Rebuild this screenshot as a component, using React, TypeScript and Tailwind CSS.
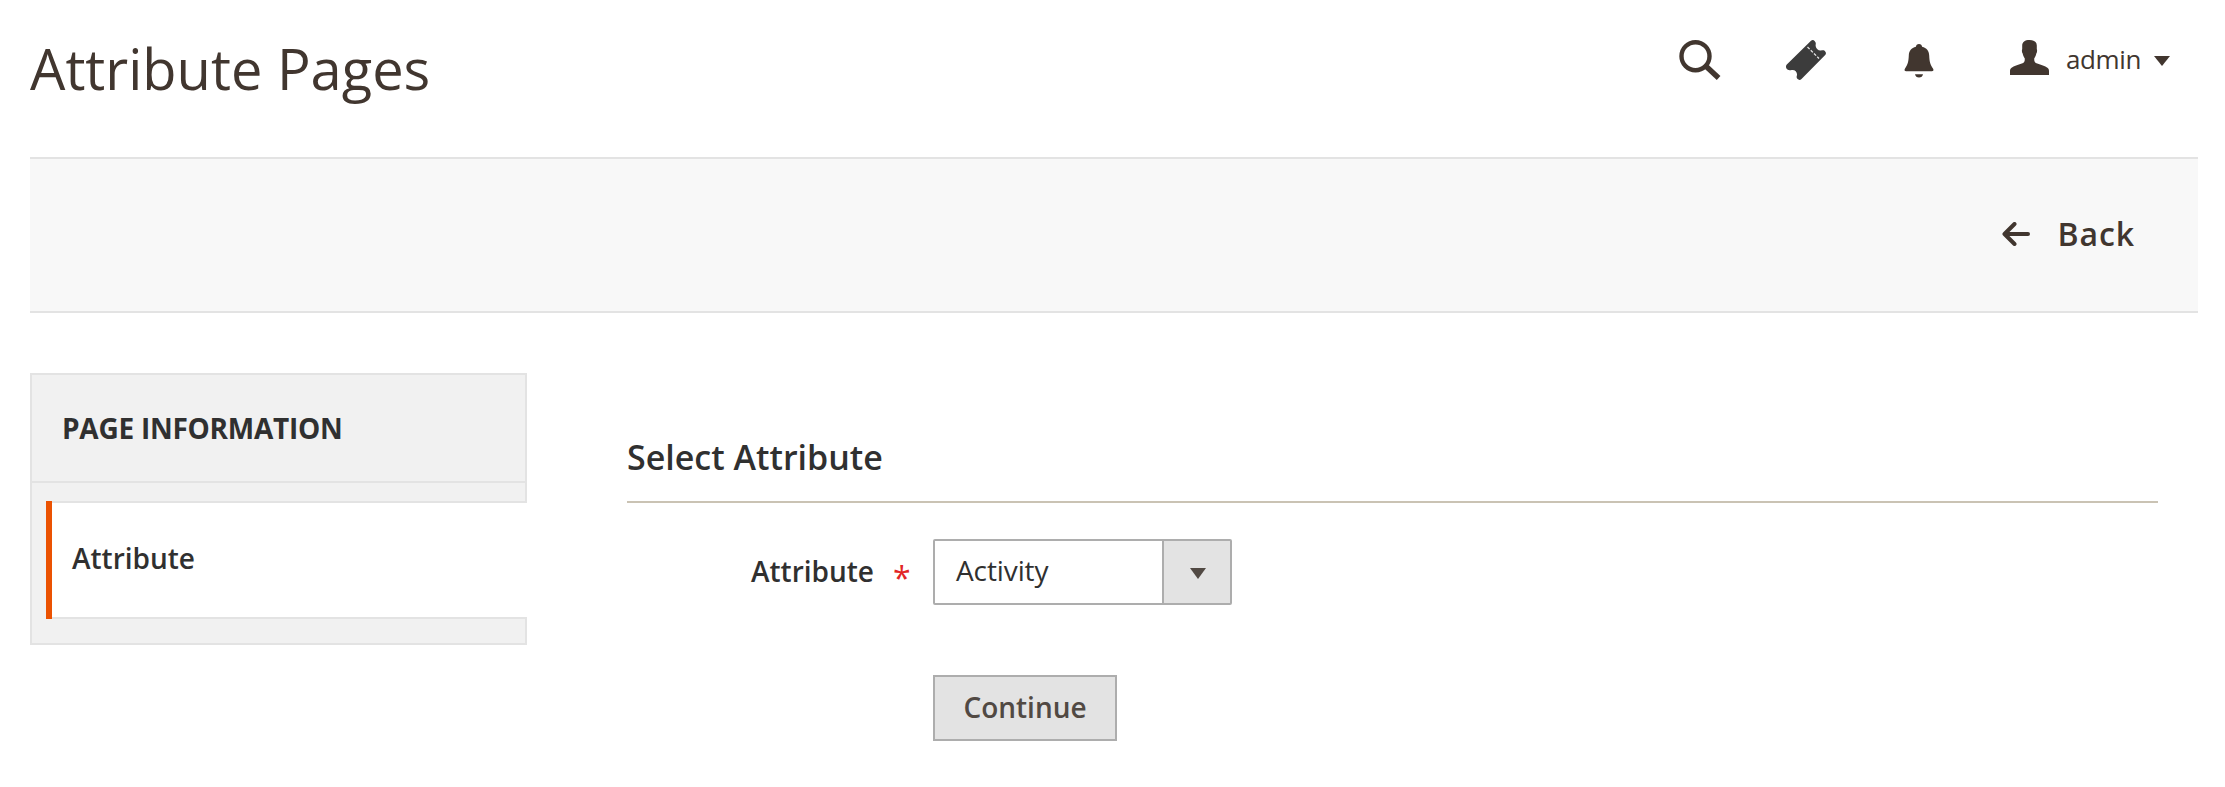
function SearchIcon() {
  return (
    <svg width="42" height="42" viewBox="0 0 42 42" fill="none" stroke="#41362f">
      <circle cx="16.5" cy="16.2" r="14" strokeWidth="4.4" />
      <path d="m27 26.200 12.600 11.800" strokeWidth="5.400" />
    </svg>
  );
}

function TicketIcon() {
  return (
    <svg width="40" height="40" viewBox="0 0 40 40">
      <path
        fill="#3c3c3c"
        d="M.8 24.6 25 .8c1.2-1 2.600-1 3.600.2l1 1.500c.5 1.300-.2 2.300.1 3.700.6 2.600 2.700 4.600 5.200 4.300 1.500-.2 2.600-.6 3.700.3l.8 1c.8 1 .7 2.300-.2 3.200L15.500 39c-1.200 1.200-2.800 1.200-3.900.1-1.400-1.300-1-2.500-.7-3.700.7-3.400-2-6-5.200-5.400-1.700.4-3 .5-4.300-.5C-.3 28.300-.5 26 .8 24.600Z"
      />
      <path d="M21.500 7 33 18.500" stroke="#e4e4e4" strokeWidth="1.300" strokeDasharray="3 1.600" />
    </svg>
  );
}

function BellIcon() {
  return (
    <svg width="30" height="34" viewBox="0 0 30 34" fill="#41362f">
      <path d="M15 0c1.800 0 3 1.200 3.100 2.800 4.500 1 6.900 4.200 7.100 8.600.3 5.600.7 8.500 3.900 13.300.8 1.300.4 2.600-1.300 2.600H2.200c-1.700 0-2.100-1.300-1.300-2.600C4.100 19.900 4.500 17 4.800 11.400 5 7 7.400 3.800 11.900 2.800 12 1.200 13.200 0 15 0Z" />
      <path d="M11 30.300h8c-.3 2-1.900 3.300-4 3.300s-3.700-1.300-4-3.300Z" />
    </svg>
  );
}

function UserIcon() {
  return (
    <svg width="39" height="35" viewBox="0 0 39 35" fill="#41362f">
      <path d="M19.500 0c4.600 0 7.300 2 7.300 5.500v3.700c.5.500.4 3.400-.5 4.300-.4 2-1 3.400-2 4.700-.3 2.800.3 4.500 2.900 5.400 3.800 1.300 8 2.500 10.200 4.200 1.300 1 1.600 2 1.600 3.500V35H0v-3.700c0-1.500.3-2.500 1.600-3.500 2.200-1.700 6.400-2.900 10.200-4.200 2.600-.9 3.200-2.600 2.900-5.400-1-1.300-1.600-2.700-2-4.700-.9-.9-1-3.800-.5-4.300V5.500C12.200 2 14.900 0 19.500 0Z" />
    </svg>
  );
}

function BackArrow() {
  return (
    <svg width="28" height="24" viewBox="0 0 28 24" fill="none" stroke="#41362f" strokeWidth="4" strokeLinecap="round" strokeLinejoin="round">
      <path d="M12.500 2 2.500 12l10 10M3 12h23" />
    </svg>
  );
}

function Header() {
  return (
    <header className="flex h-[157px] items-start justify-between pr-[28px]">
      <h1 className="mt-[30px] text-[56px] leading-[76px] text-[#41362f]">Attribute Pages</h1>
      <div className="mt-[40px] flex h-[42px] items-start">
        <button className="mr-[65px]"><SearchIcon /></button>
        <button className="mr-[78px]"><TicketIcon /></button>
        <button className="mt-[4px] mr-[76px]"><BellIcon /></button>
        <button className="flex items-start">
          <UserIcon />
          <span className="mt-[1px] ml-[17px] w-[88px] text-left text-[26px] leading-[36px] tracking-[-0.4px] text-[#41362f]">admin</span>
          <svg className="mt-[16px]" width="16" height="10" viewBox="0 0 16 10" fill="#41362f">
            <path d="M0 0h16L8 10Z" />
          </svg>
        </button>
      </div>
    </header>
  );
}

function Sidebar() {
  return (
    <aside className="h-[272px] w-[497px] border-2 border-[#e3e3e3] bg-[#f1f1f1]">
      <div className="h-[108px] border-b-2 border-[#e3e3e3] pt-[34px] pl-[30px] text-[28px] leading-[38px] font-bold tracking-[-0.25px] text-[#303030]">
        PAGE INFORMATION
      </div>
      <div className="mt-[18px] -mr-[2px] ml-[14px] flex h-[118px]">
        <div className="w-[6px] bg-[#eb5202]" />
        <div className="flex-1 rounded-r-[1px] border-y-2 border-[#e3e3e3] bg-white pt-[36px] pl-[20px] text-[28px] leading-[38px] font-semibold text-[#303030]">
          Attribute
        </div>
      </div>
    </aside>
  );
}

function AttributeForm() {
  return (
    <section className="mt-[61px] ml-[100px] w-[1531px]">
      <h2 className="h-[69px] border-b-2 border-[#cac3b4] text-[34px] leading-[46px] font-semibold text-[#303030]">
        Select Attribute
      </h2>
      <div className="mt-[36px] flex">
        <label className="mt-[13px] ml-[124px] w-[142px] text-[28px] leading-[38px] font-semibold text-[#303030]">Attribute</label>
        <span className="mt-[17px] w-[40px] text-[32px] leading-[44px] text-[#e22626]">*</span>
        <div className="flex h-[66px] w-[299px] rounded-[2px] border-2 border-[#adadad] bg-white">
          <span className="flex-1 pt-[10px] pl-[21px] text-[28px] leading-[38px] tracking-[-0.1px] text-[#303030]">Activity</span>
          <span className="flex w-[68px] items-start border-l-2 border-[#adadad] bg-[#e3e3e3] pt-[27px] pl-[26px]">
            <svg width="16" height="11" viewBox="0 0 16 11" fill="#514943"><path d="M0 0h16L8 11Z" /></svg>
          </span>
        </div>
      </div>
      <button className="mt-[70px] ml-[306px] block h-[66px] w-[184px] border-2 border-[#adadad] bg-[#e3e3e3] pb-[2px] text-[28px] leading-[38px] font-semibold text-[#514943]">
        Continue
      </button>
    </section>
  );
}

export default function App() {
  return (
    <main className="h-[787px] overflow-hidden bg-white pr-[27px] pl-[30px] font-['Open_Sans',sans-serif]">
      <Header />
      <div className="flex h-[156px] justify-end border-y-2 border-[#e3e3e3] bg-[#f8f8f8] pr-[63px]">
        <button className="flex items-center pb-[2px] text-[#41362f]">
          <BackArrow />
          <span className="ml-[28px] text-[32px] leading-[44px] font-semibold tracking-[0.9px]">Back</span>
        </button>
      </div>
      <div className="mt-[60px] flex items-start">
        <Sidebar />
        <AttributeForm />
      </div>
    </main>
  );
}
